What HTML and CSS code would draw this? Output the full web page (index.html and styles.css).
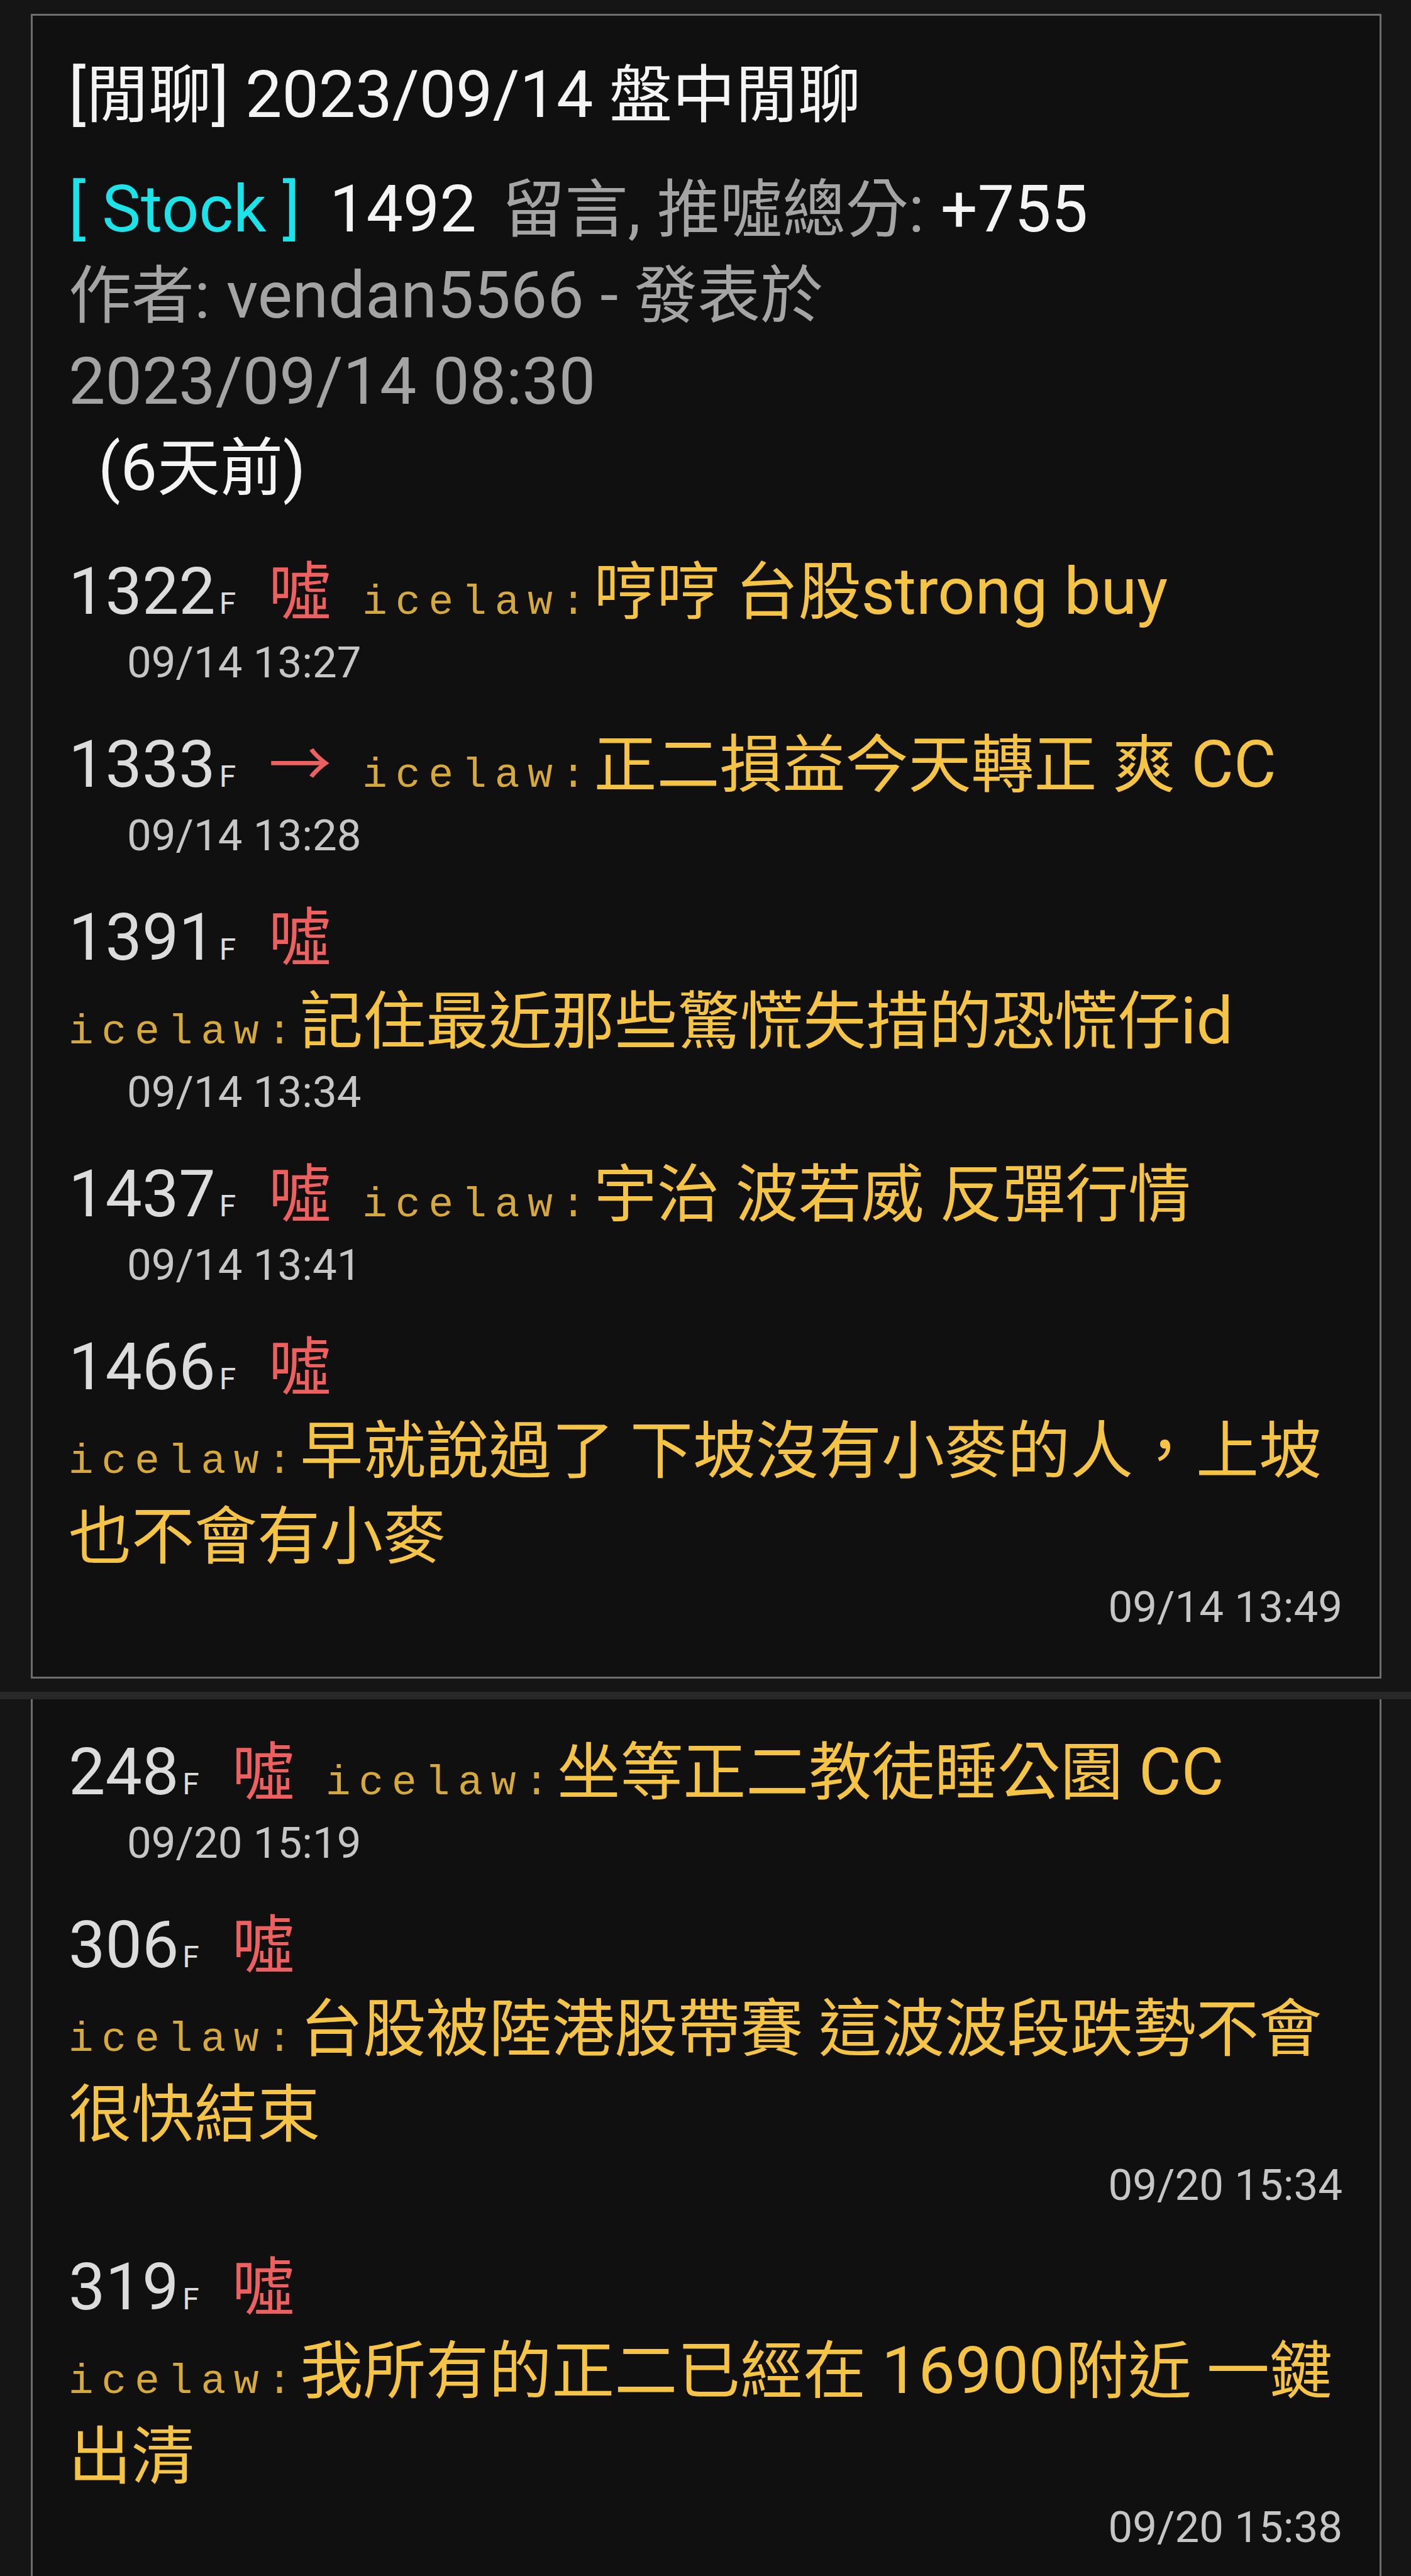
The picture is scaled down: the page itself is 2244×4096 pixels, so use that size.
FILE: index.html
```html
<!DOCTYPE html>
<html lang="zh-Hant">
<head>
<meta charset="utf-8">
<title>[閒聊] 2023/09/14 盤中閒聊</title>
<link rel="stylesheet" href="styles.css">
</head>
<body>
<div class="page">
  <article class="card card-top">
    <h1 class="title"><span class="lt">[</span>閒聊<span class="lt">] 2023/09/14 </span>盤中閒聊</h1>
    <div class="meta">
      <p class="meta-line"><span class="board lt">[ Stock ]</span><span class="white lt">1492</span><span class="gray stat"> 留言<span class="lt">, </span>推噓總分<span class="lt">: </span></span><span class="white lt">+755</span></p>
      <p class="meta-line gray">作者<span class="lt">: vendan5566 - </span>發表於</p>
      <p class="meta-line gray"><span class="lt">2023/09/14 08:30</span></p>
      <p class="meta-line white ago"><span class="lt">(6</span>天前<span class="lt">)</span></p>
    </div>
    <ul class="comments">
      <li class="comment">
        <div class="c-row">
          <span class="floor">1322<span class="f">F</span></span>
          <span class="tag">噓</span>
          <span class="content"><span class="user">icelaw:</span>哼哼 台股<span class="lt">strong buy</span></span>
        </div>
        <div class="time">09/14 13:27</div>
      </li>
      <li class="comment">
        <div class="c-row">
          <span class="floor">1333<span class="f">F</span></span>
          <span class="tag">→</span>
          <span class="content"><span class="user">icelaw:</span>正二損益今天轉正 爽 <span class="lt">CC</span></span>
        </div>
        <div class="time">09/14 13:28</div>
      </li>
      <li class="comment">
        <div class="c-row">
          <span class="floor">1391<span class="f">F</span></span>
          <span class="tag">噓</span>
          <span class="content"><span class="user">icelaw:</span>記住最近那些驚慌失措的恐慌仔<span class="lt">id</span></span>
        </div>
        <div class="time">09/14 13:34</div>
      </li>
      <li class="comment">
        <div class="c-row">
          <span class="floor">1437<span class="f">F</span></span>
          <span class="tag">噓</span>
          <span class="content"><span class="user">icelaw:</span>宇治 波若威 反彈行情</span>
        </div>
        <div class="time">09/14 13:41</div>
      </li>
      <li class="comment">
        <div class="c-row">
          <span class="floor">1466<span class="f">F</span></span>
          <span class="tag">噓</span>
          <span class="content"><span class="user">icelaw:</span>早就說過了 下坡沒有小麥的人，上坡也不會有小麥</span>
        </div>
        <div class="time time-right">09/14 13:49</div>
      </li>
    </ul>
  </article>

  <div class="stitch"></div>

  <article class="card card-cont">
    <ul class="comments comments-cont">
      <li class="comment">
        <div class="c-row">
          <span class="floor">248<span class="f">F</span></span>
          <span class="tag">噓</span>
          <span class="content"><span class="user">icelaw:</span>坐等正二教徒睡公園 <span class="lt">CC</span></span>
        </div>
        <div class="time">09/20 15:19</div>
      </li>
      <li class="comment">
        <div class="c-row">
          <span class="floor">306<span class="f">F</span></span>
          <span class="tag">噓</span>
          <span class="content"><span class="user">icelaw:</span>台股被陸港股帶賽 這波波段跌勢不會很快結束</span>
        </div>
        <div class="time time-right">09/20 15:34</div>
      </li>
      <li class="comment">
        <div class="c-row">
          <span class="floor">319<span class="f">F</span></span>
          <span class="tag">噓</span>
          <span class="content"><span class="user">icelaw:</span>我所有的正二已經在 <span class="lt">16900</span>附近 一鍵出清</span>
        </div>
        <div class="time time-right">09/20 15:38</div>
      </li>
    </ul>
  </article>
</div>
</body>
</html>
```

FILE: styles.css
```css
* {
  box-sizing: border-box;
  margin: 0;
  padding: 0;
}

html, body {
  background: #151515;
}

body {
  font-family: Roboto, "Noto Sans CJK TC", sans-serif;
  font-size: 100px;
  color: #f2f2f2;
}

.page {
  padding-top: 22px;
}

.card {
  margin: 0 47px 0 49px;
  background: #101010;
  border: 3px solid #6e6e6e;
}

.card-top {
  padding: 59px 59px 66px 57px;
}

.card-cont {
  border-top: none;
  padding: 49px 59px 200px 57px;
}

.lt {
  font-size: 104px;
  line-height: 100px;
}

.title {
  font-weight: 400;
  font-size: 100px;
  line-height: 136px;
  color: #f4f4f4;
}

.meta {
  margin-top: 45px;
}

.meta-line {
  line-height: 137px;
}

.gray {
  color: #a4a4a4;
}

.white {
  color: #f4f4f4;
}

.board {
  color: #1ae4ea;
  margin-right: 47px;
}

.stat {
  margin-left: 16px;
}

.ago {
  padding-left: 47px;
}

.comments {
  list-style: none;
  margin-top: 61px;
}

.comments-cont {
  margin-top: 0;
}

.comment + .comment {
  margin-top: 51px;
}

.c-row {
  display: flex;
  flex-wrap: wrap;
  align-items: baseline;
  line-height: 136px;
}

.floor {
  font-size: 104px;
  line-height: 133px;
  color: #dcdcdc;
  margin-right: 52px;
  white-space: nowrap;
}

.f {
  font-size: 48px;
  line-height: 48px;
  margin-left: 6px;
}

.tag {
  font-family: "Noto Sans CJK TC", Roboto, sans-serif;
  color: #ee5f5f;
  line-height: 100px;
  margin-right: 49px;
}

.content {
  flex: 0 1 auto;
  min-width: 0;
  color: #f6c445;
}

.user {
  font-family: "Liberation Mono", "DejaVu Sans Mono", monospace;
  font-size: 66px;
  line-height: 66px;
  letter-spacing: 13px;
  color: #d6a93c;
}

.time {
  font-size: 69px;
  line-height: 88px;
  color: #c6c6c6;
  padding-left: 93px;
}

.time-right {
  padding-left: 0;
  text-align: right;
}

.stitch {
  margin-top: 21px;
  height: 12px;
  background: #282828;
}
```
